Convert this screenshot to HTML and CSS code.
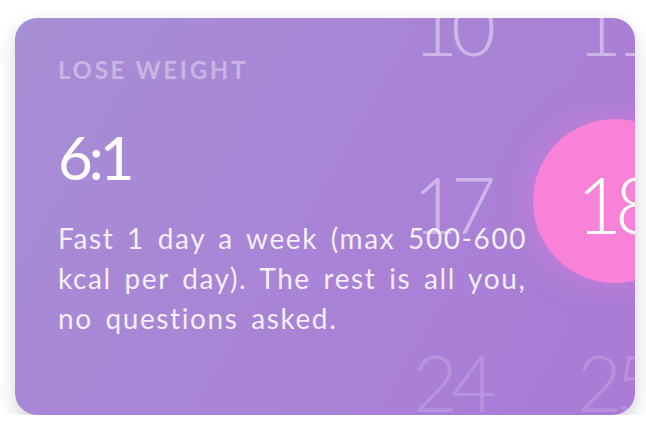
FILE: index.html
```html
<!DOCTYPE html>
<html lang="en">
<head>
<meta charset="utf-8">
<title>Lose weight 6:1</title>
<link rel="stylesheet" href="styles.css">
</head>
<body>
<div class="card">
  <div class="cal" aria-hidden="true">
    <div class="day">10</div>
    <div class="day">11</div>
    <div class="day">17</div>
    <div class="day today"><span class="dot"></span><span class="num">18</span></div>
    <div class="day dim">24</div>
    <div class="day dim">25</div>
  </div>
  <div class="content">
    <div class="eyebrow">LOSE WEIGHT</div>
    <div class="ratio">6:1</div>
    <p class="desc">Fast 1 day a week (max 500-600 kcal per day). The rest is all you, no questions asked.</p>
  </div>
</div>
</body>
</html>
```
FILE: styles.css
```css
html, body {
  margin: 0;
  padding: 0;
  background: #ffffff;
}
body {
  padding: 18px 11px 0 15px;
  font-family: Lato, "Open Sans", sans-serif;
}
.card {
  position: relative;
  height: 397px;
  border-radius: 22px;
  overflow: hidden;
  background: linear-gradient(120deg, #a68ed4 0%, #a985d6 45%, #a97bd6 100%);
  box-shadow: 0 8px 18px rgba(60, 50, 70, 0.22);
}
.cal {
  position: absolute;
  left: 354px;
  top: -84px;
  display: grid;
  grid-template-columns: repeat(2, 164px);
  grid-auto-rows: 178px;
}
.day {
  position: relative;
  display: flex;
  align-items: center;
  justify-content: center;
  font-size: 78px;
  font-weight: 300;
  letter-spacing: -7px;
  line-height: 1;
  color: rgba(255, 255, 255, 0.42);
  padding-top: 6px;
}
.day.dim {
  color: rgba(255, 255, 255, 0.16);
}
.today .dot {
  position: absolute;
  left: 0;
  top: 7px;
  width: 164px;
  height: 164px;
  border-radius: 50%;
  background: #f882d8;
  box-shadow: 0 0 30px 6px rgba(240, 120, 220, 0.35);
}
.today .num {
  position: relative;
  color: #ffffff;
}
.content {
  position: relative;
  padding: 38px 0 0 43px;
  width: 485px;
}
.eyebrow {
  font-size: 24px;
  font-weight: 700;
  letter-spacing: 2.7px;
  color: rgba(255, 255, 255, 0.38);
  line-height: 28px;
}
.ratio {
  margin-top: 38px;
  font-size: 60px;
  font-weight: 400;
  letter-spacing: -4px;
  color: #ffffff;
  line-height: 70px;
}
.desc {
  margin: 26px 0 0;
  font-size: 28px;
  letter-spacing: 1.6px;
  word-spacing: 4px;
  line-height: 40px;
  color: rgba(255, 255, 255, 0.88);
}
```
